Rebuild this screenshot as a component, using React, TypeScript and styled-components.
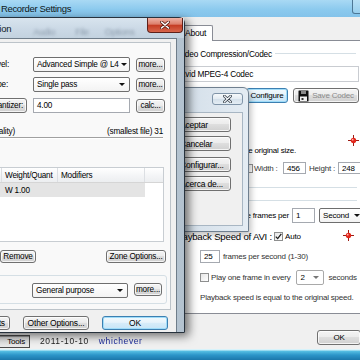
import React from "react";
import styled, { createGlobalStyle } from "styled-components";

const Global = createGlobalStyle`
  html, body { margin: 0; padding: 0; }
  body {
    width: 360px; height: 360px; overflow: hidden; background: #f0f0f0;
    font-family: "Liberation Sans", Arial, sans-serif; font-size: 8px; color: #000;
  }
  #root { width: 360px; height: 360px; }
`;

const Desktop = styled.div`
  position: relative; width: 360px; height: 360px; overflow: hidden;
  letter-spacing: -0.2px;
`;

/* ---------- shared controls ---------- */
const Btn = styled.div<{ $w?: number; $h?: number; $focus?: boolean; $off?: boolean; $ml?: number }>`
  box-sizing: border-box; flex: none;
  width: ${(p) => (p.$w ? `${p.$w}px` : "auto")};
  height: ${(p) => p.$h ?? 15}px;
  margin-left: ${(p) => p.$ml ?? 0}px;
  padding: 0 3px;
  display: flex; align-items: center; justify-content: center; gap: 3px;
  white-space: nowrap;
  color: ${(p) => (p.$off ? "#8a8a8a" : "#000")};
  border: 1px solid ${(p) => (p.$focus ? "#3c7fb1" : "#707070")};
  border-radius: 3px;
  background: ${(p) =>
    p.$focus
      ? "linear-gradient(#f2f9fd 0%, #e6f3fb 45%, #d6ecf9 50%, #c8e5f7 100%)"
      : "linear-gradient(#f4f4f4 0%, #ececec 45%, #dedede 50%, #d0d0d0 100%)"};
  box-shadow: inset 0 0 0 1px ${(p) => (p.$focus ? "#9fdcf9" : "rgba(255,255,255,.75)")};
`;

const Combo = styled.div<{ $w: number; $ml?: number; $light?: boolean }>`
  box-sizing: border-box; flex: none; overflow: hidden;
  width: ${(p) => p.$w}px; height: 15px;
  margin-left: ${(p) => p.$ml ?? 0}px;
  display: flex; align-items: center; justify-content: space-between; gap: 2px;
  padding: 0 4px 0 3px; white-space: nowrap;
  border: 1px solid ${(p) => (p.$light ? "#a9a9a9" : "#6e6e6e")};
  border-radius: 2px;
  background: ${(p) => (p.$light ? "#fff" : "linear-gradient(#ffffff, #f3f3f3)")};
`;

const Arrow = styled.span<{ $c?: string }>`
  width: 0; height: 0; flex: none;
  border-left: 3px solid transparent; border-right: 3px solid transparent;
  border-top: 3.5px solid ${(p) => p.$c ?? "#111"};
`;

const Field = styled.div<{ $w: number; $h?: number; $ml?: number }>`
  box-sizing: border-box; flex: none;
  width: ${(p) => p.$w}px; height: ${(p) => p.$h ?? 15}px;
  margin-left: ${(p) => p.$ml ?? 0}px;
  display: flex; align-items: center; padding-left: 3px;
  border: 1px solid #a5a9b0; background: #fff; white-space: nowrap;
`;

const Check = styled.div<{ $ml?: number }>`
  box-sizing: border-box; flex: none; width: 9px; height: 9px;
  margin-left: ${(p) => p.$ml ?? 0}px;
  border: 1px solid #8e8f8f; background: linear-gradient(135deg, #e6e6e6, #ffffff);
  display: flex; align-items: center; justify-content: center;
`;

const Txt = styled.span<{ $ml?: number; $c?: string }>`
  flex: none; white-space: nowrap; margin-left: ${(p) => p.$ml ?? 0}px;
  color: ${(p) => p.$c ?? "inherit"};
`;

/* ---------- background Recorder window ---------- */
const RecorderWin = styled.div`
  position: absolute; inset: 0; z-index: 1;
  display: flex; flex-direction: column; background: #f0f0f0;
`;

const RecTitle = styled.div`
  height: 17px; flex: none; display: flex; align-items: center;
  padding-left: 1px;
  background: linear-gradient(#a9d9f4, #8ccaee 55%, #84c3ea);
`;

const TitleText = styled.span`
  font-size: 9.5px; letter-spacing: -0.35px; color: #101820; white-space: nowrap;
`;

const CaptionStub = styled.div`
  margin-left: auto; margin-right: -4px; align-self: flex-start;
  width: 12px; height: 14px; box-sizing: border-box;
  border: 1px solid #4d7796; border-top: none; border-radius: 0 0 3px 3px;
  background: linear-gradient(#b8e0f6, #98cfee);
`;

const RecBody = styled.div`
  flex: 1; display: flex; flex-direction: column; min-height: 0;
`;

const TabStrip = styled.div`
  height: 23px; flex: none; display: flex; align-items: flex-end;
  padding-left: 183px;
`;

const Tab = styled.div`
  box-sizing: border-box; height: 16px; width: 30px; margin-bottom: -1px;
  padding: 2px 0 0 1px;
  border: 1px solid #898c95; border-bottom: none; border-radius: 2px 2px 0 0;
  background: #fff; position: relative; z-index: 1;
  font-size: 8.5px; white-space: nowrap;
`;

const TabPage = styled.div`
  box-sizing: border-box; height: 274px; flex: none;
  margin-left: 177px; padding-right: 1px;
  border: 1px solid #898c95; border-right: none; background: #fff;
  display: flex; flex-direction: column;
`;

const GroupTitle = styled.div<{ $mt: number }>`
  margin-top: ${(p) => p.$mt}px; height: 9px; display: flex; align-items: center; gap: 3px;
  white-space: nowrap; font-size: 8.3px;
  &::after { content: ""; flex: 1; height: 1px; background: #d5dfe5; margin-right: 3px; }
`;

const CodecBox = styled.div<{ $mt: number }>`
  margin-top: ${(p) => p.$mt}px; height: 16px; box-sizing: border-box;
  display: flex; align-items: center; padding-left: 2px;
  border: 1px solid #c9ccd1; border-left: none; background: #fff; font-size: 8.3px;
`;

const PageRow = styled.div<{ $mt: number; $h: number; $pl?: number; $end?: boolean; $gap?: number }>`
  margin-top: ${(p) => p.$mt}px; height: ${(p) => p.$h}px; flex: none;
  padding-left: ${(p) => p.$pl ?? 0}px;
  display: flex; align-items: center;
  justify-content: ${(p) => (p.$end ? "flex-end" : "flex-start")};
  gap: ${(p) => p.$gap ?? 0}px;
`;

const RightLabel = styled.span<{ $w: number; $size?: number }>`
  flex: none; width: ${(p) => p.$w}px; display: flex; justify-content: flex-end;
  white-space: nowrap; font-size: ${(p) => p.$size ?? 8}px;
`;

const FixedLabel = styled.span<{ $w: number; $ml?: number }>`
  flex: none; width: ${(p) => p.$w}px; margin-left: ${(p) => p.$ml ?? 0}px; white-space: nowrap; color: #333;
`;

const GroupLine = styled.div<{ $mt: number }>`
  margin-top: ${(p) => p.$mt}px; height: 1px; flex: none; background: #d5dfe5; margin-right: 2px;
`;

const Footer = styled.div`
  flex: 1; display: flex; align-items: flex-start; padding-top: 16px; box-sizing: border-box;
`;

const ToolsBtn = styled.div`
  box-sizing: border-box; margin-top: 5px; margin-left: -12px; width: 42px; height: 13px;
  border: 1px solid #4a4a4a; background: linear-gradient(#d9d9d9, #e9e9e9);
  box-shadow: inset 1px 1px 0 #9a9a9a;
  display: flex; align-items: center; justify-content: flex-end; padding-right: 4px;
  white-space: nowrap; font-size: 8px;
`;

const StatusTxt = styled.span<{ $ml: number; $c: string }>`
  margin-top: 6px; margin-left: ${(p) => p.$ml}px; color: ${(p) => p.$c};
  white-space: nowrap; font-size: 8.5px; letter-spacing: 0.6px; filter: blur(0.5px);
`;

const OkSlot = styled.div`
  margin-left: auto; margin-right: -1px; display: flex;
`;

const Taskbar = styled.div`
  height: 11px; flex: none;
  background: linear-gradient(#d7f3fb 0, #d7f3fb 1px, #57c0e4 2px, #2c95c9 6px, #1b77ab 100%);
`;

/* ---------- small codec dialog ---------- */
const SmallWin = styled.div`
  position: absolute; left: 165px; top: 87px; z-index: 2;
  width: 84px; height: 145px; box-sizing: border-box;
  border: 1px solid #6f7f8f; border-radius: 6px 6px 0 0;
  background: linear-gradient(90deg, #cfdbe6, #e4ecf3);
  box-shadow: 2px 3px 6px rgba(0, 0, 0, 0.25);
  display: flex; flex-direction: column; padding: 0 5px 5px 6px;
`;

const SmallTitle = styled.div`
  height: 24px; flex: none; display: flex; align-items: flex-start; justify-content: flex-end;
  padding-top: 5px; box-sizing: border-box;
`;

const GlassClose = styled.div`
  width: 31px; height: 12px; box-sizing: border-box; margin-right: 0;
  border: 1px solid #8094a8; border-radius: 3px;
  background: linear-gradient(#f6f9fb, #e3ebf2 50%, #d4e0ea 51%, #e4edf4);
  display: flex; align-items: center; justify-content: center;
`;

const SmallBody = styled.div`
  flex: 1; background: #f0f0f0; border: 1px solid #a8b6c3;
  display: flex; flex-direction: column; align-items: flex-end;
  padding: 4px 11px 0 0;
`;

const SmallBtn = styled(Btn)<{ $mt: number }>`
  margin-top: ${(p) => p.$mt}px; justify-content: flex-start; padding-left: 4px;
  font-size: 8.5px;
`;

/* ---------- front Xvid dialog ---------- */
const FrontWin = styled.div`
  position: absolute; left: -70px; top: 17px; z-index: 3;
  width: 255px; height: 316px; box-sizing: border-box;
  border: 1px solid #27323d; border-radius: 6px 6px 0 0;
  background: linear-gradient(90deg, #bccbd8, #c7d5e2 70%, #b3c2cf);
  box-shadow: 4px 3px 10px rgba(0, 0, 0, 0.55);
  display: flex; flex-direction: column; padding: 0 7px 0 7px;
`;

const FrontTitle = styled.div`
  height: 20px; flex: none; display: flex; align-items: flex-start;
  margin: 0 -7px; padding-left: 10px;
  background: linear-gradient(#d8e4ee, #cad8e5 60%, #c3d2df);
`;

const FrontTitleText = styled.span`
  margin-top: 5px; font-size: 9.5px; letter-spacing: -0.3px; color: #0e1a24; white-space: nowrap;
`;

const Ghost = styled.span<{ $ml: number }>`
  margin-top: 9px; margin-left: ${(p) => p.$ml}px; font-size: 9px; white-space: nowrap;
  color: rgba(40, 60, 80, 0.4); filter: blur(1.4px);
`;

const RedClose = styled.div`
  margin-left: auto; margin-right: 1px; width: 36px; height: 15px; box-sizing: border-box;
  border: 1px solid #5e211a; border-top: none; border-radius: 0 0 4px 4px;
  background: linear-gradient(#eeb3a6 0%, #dc7d6a 45%, #c43a22 50%, #d8664c 100%);
  display: flex; align-items: center; justify-content: center;
`;

const Client = styled.div`
  flex: 1; background: #f0f0f0; border: 1px solid #6f7d8a; border-bottom: none;
  display: flex; flex-direction: column; padding: 3px 5px 0 5px;
`;

const Panel = styled.div`
  flex: none; box-sizing: border-box; height: 268px;
  border: 1px solid #bcc3c9; background: #f9f9f9;
  display: flex; flex-direction: column; padding-bottom: 5px;
  font-size: 8.2px;
`;

const FormRow = styled.div<{ $mt: number }>`
  margin-top: ${(p) => p.$mt}px; height: 15px; flex: none; display: flex; align-items: center;
`;

const LabelCell = styled.div<{ $pr: number }>`
  width: 84px; flex: none; display: flex; justify-content: flex-end; padding-right: ${(p) => p.$pr}px;
  box-sizing: border-box; white-space: nowrap;
`;

const RangeRow = styled.div`
  margin-top: 14px; height: 9px; flex: none; display: flex; align-items: center;
  justify-content: space-between; padding-right: 7px; white-space: nowrap;
`;

const Groove = styled.div`
  margin-top: 1px; height: 2px; flex: none; margin-right: 7px;
  border-top: 1px solid #a0a0a0; border-bottom: 1px solid #ffffff; box-sizing: border-box;
`;

const Table = styled.div`
  margin: 28px 6px 0 5px; height: 75px; flex: none; box-sizing: border-box;
  border: 1px solid #c8cdd2; background: #fff; display: flex; flex-direction: column;
`;

const TRow = styled.div<{ $head?: boolean }>`
  display: grid; grid-template-columns: 51px 56px 87px 1fr;
  height: ${(p) => (p.$head ? 15 : 14)}px; flex: none;
  background: ${(p) => (p.$head ? "linear-gradient(#ffffff, #f3f4f6 60%, #eceef0)" : "transparent")};
  border-bottom: ${(p) => (p.$head ? "1px solid #d5d5d5" : "none")};
  box-sizing: border-box;
`;

const TCell = styled.div<{ $head?: boolean; $sel?: boolean }>`
  display: flex; align-items: center; padding-left: 3px; white-space: nowrap; overflow: hidden;
  border-right: ${(p) => (p.$head ? "1px solid #dcdfe3" : "none")};
  background: ${(p) => (p.$sel ? "#e4e4e4" : "transparent")};
`;

const BtnRow = styled.div`
  margin-top: 8px; height: 13px; flex: none; display: flex; align-items: center; gap: 5px;
  padding-left: 10px; padding-right: 4px;
`;

const Spacer = styled.div`flex: 1;`;

const GroupBox = styled.div`
  margin: 12px 3px 0 3px; height: 29px; flex: none; box-sizing: border-box;
  border: 1px solid #d5dfe5; border-radius: 3px;
  display: flex; align-items: flex-start; padding-top: 7px; padding-left: 83px;
`;

const QuantBtn = styled(Btn)`
  justify-content: flex-end;
`;

const DialogButtons = styled.div`
  margin-top: 6px; height: 14px; flex: none; display: flex; justify-content: flex-end; gap: 13px;
  padding-right: 3px; font-size: 8.5px;
`;

/* ---------- icons ---------- */
const Target = () => (
  <svg width="11" height="11" viewBox="0 0 11 11">
    <path d="M5.5 0v3.2M5.5 7.8V11M0 5.5h3.2M7.8 5.5H11" stroke="#9c1b12" strokeWidth="1" />
    <circle cx="5.5" cy="5.5" r="2.7" fill="#e3261b" />
    <circle cx="4.7" cy="4.7" r="0.9" fill="#ffb0a8" />
  </svg>
);

const Floppy = () => (
  <svg width="11" height="12" viewBox="0 0 11 12">
    <rect x="0.5" y="0.5" width="10" height="11" rx="0.5" fill="#111" />
    <rect x="3" y="0.5" width="5" height="3.5" fill="#8a8a8a" />
    <rect x="2" y="6.5" width="7" height="4.5" fill="#f2f2f2" />
    <rect x="3.5" y="8" width="2" height="2" fill="#333" />
  </svg>
);

const CheckMark = () => (
  <svg width="7" height="7" viewBox="0 0 7 7">
    <path d="M0.8 3.6 L2.7 5.6 L6.3 0.9" stroke="#1d1d1d" strokeWidth="1.3" fill="none" />
  </svg>
);

const WhiteX = () => (
  <svg width="10" height="8" viewBox="0 0 10 8">
    <path d="M1.5 1 L8.5 7 M8.5 1 L1.5 7" stroke="#5a1d14" strokeWidth="3" strokeLinecap="round" />
    <path d="M1.5 1 L8.5 7 M8.5 1 L1.5 7" stroke="#ffffff" strokeWidth="1.6" strokeLinecap="round" />
  </svg>
);

const OutlineX = () => (
  <svg width="9" height="8" viewBox="0 0 9 8">
    <path d="M1.2 1 L7.8 7 M7.8 1 L1.2 7" stroke="#2c3640" strokeWidth="2.6" strokeLinecap="round" />
    <path d="M1.2 1 L7.8 7 M7.8 1 L1.2 7" stroke="#f4f7fa" strokeWidth="1.2" strokeLinecap="round" />
  </svg>
);

export default function App() {
  return (
    <>
      <Global />
      <Desktop>
        <RecorderWin>
          <RecTitle>
            <TitleText>Recorder Settings</TitleText>
            <CaptionStub />
          </RecTitle>
          <RecBody>
            <TabStrip>
              <Tab>About</Tab>
            </TabStrip>
            <TabPage>
              <GroupTitle $mt={8}>Video Compression/Codec</GroupTitle>
              <CodecBox $mt={8}>Xvid MPEG-4 Codec</CodecBox>
              <PageRow $mt={6} $h={15} $end $gap={5}>
                <Btn $w={60}>Select Codec</Btn>
                <Btn $w={42} $focus>Configure</Btn>
                <Btn $w={66} $off>
                  <Floppy />
                  Save Codec
                </Btn>
              </PageRow>
              <PageRow $mt={32} $h={11} $end>
                <Target />
              </PageRow>
              <PageRow $mt={0} $h={8} $pl={44}>
                <Txt>Keep the original size.</Txt>
              </PageRow>
              <PageRow $mt={8} $h={12} $pl={66}>
                <Check />
                <FixedLabel $w={28} $ml={1}>Width :</FixedLabel>
                <Field $w={23} $h={12} $ml={1}>456</Field>
                <FixedLabel $w={28} $ml={3}>Height :</FixedLabel>
                <Field $w={23} $h={12} $ml={1}>248</Field>
              </PageRow>
              <GroupLine $mt={13} />
              <GroupLine $mt={12} />
              <PageRow $mt={7} $h={15}>
                <RightLabel $w={111}>Capture frames per</RightLabel>
                <Field $w={23} $ml={3}>1</Field>
                <Combo $w={46} $ml={4}>
                  Second
                  <Arrow />
                </Combo>
              </PageRow>
              <PageRow $mt={8} $h={10}>
                <RightLabel $w={94} $size={9.6}>Playback Speed of AVI :</RightLabel>
                <Check $ml={2}>
                  <CheckMark />
                </Check>
                <Txt $ml={2}>Auto</Txt>
                <Txt $ml={42}>
                  <Target />
                </Txt>
              </PageRow>
              <PageRow $mt={9} $h={13} $pl={22}>
                <Field $w={20} $h={13}>25</Field>
                <Txt $ml={3} $c="#333">frames per second (1-30)</Txt>
              </PageRow>
              <PageRow $mt={8} $h={13} $pl={22}>
                <Check />
                <Txt $ml={2} $c="#333">Play one frame in every</Txt>
                <Combo $w={28} $ml={6} $light>
                  2
                  <Arrow $c="#777" />
                </Combo>
                <Txt $ml={4} $c="#333">seconds</Txt>
              </PageRow>
              <PageRow $mt={8} $h={10} $pl={22}>
                <Txt $c="#333">Playback speed is equal to the original speed.</Txt>
              </PageRow>
            </TabPage>
            <Footer>
              <ToolsBtn>Tools</ToolsBtn>
              <StatusTxt $ml={10} $c="#1e1e1e">2011-10-10</StatusTxt>
              <StatusTxt $ml={10} $c="#1b2a9a">whichever</StatusTxt>
              <OkSlot>
                <Btn $w={44}>OK</Btn>
              </OkSlot>
            </Footer>
          </RecBody>
          <Taskbar />
        </RecorderWin>

        <SmallWin>
          <SmallTitle>
            <GlassClose>
              <OutlineX />
            </GlassClose>
          </SmallTitle>
          <SmallBody>
            <SmallBtn $w={56} $mt={0}>Aceptar</SmallBtn>
            <SmallBtn $w={56} $mt={4}>Cancelar</SmallBtn>
            <SmallBtn $w={56} $mt={6}>Configurar...</SmallBtn>
            <SmallBtn $w={56} $mt={4}>Acerca de...</SmallBtn>
          </SmallBody>
        </SmallWin>

        <FrontWin>
          <FrontTitle>
            <FrontTitleText>Xvid configuration</FrontTitleText>
            <Ghost $ml={22}>Audio</Ghost>
            <Ghost $ml={20}>File</Ghost>
            <Ghost $ml={16}>Options</Ghost>
            <RedClose>
              <WhiteX />
            </RedClose>
          </FrontTitle>
          <Client>
            <Panel>
              <FormRow $mt={14}>
                <LabelCell $pr={20}>Profile @ Level:</LabelCell>
                <Combo $w={97} $ml={4}>
                  Advanced Simple @ L4
                  <Arrow />
                </Combo>
                <Btn $w={29} $ml={6} $h={14}>more...</Btn>
              </FormRow>
              <FormRow $mt={5}>
                <LabelCell $pr={21}>Encoding type:</LabelCell>
                <Combo $w={97} $ml={4}>
                  Single pass
                  <Arrow />
                </Combo>
                <Btn $w={29} $ml={6} $h={14}>more...</Btn>
              </FormRow>
              <FormRow $mt={6}>
                <LabelCell $pr={2}>
                  <QuantBtn $w={66} $h={15}>Target quantizer:</QuantBtn>
                </LabelCell>
                <Field $w={97} $ml={4}>4.00</Field>
                <Btn $w={29} $ml={6} $h={14}>calc...</Btn>
              </FormRow>
              <RangeRow>
                <span>1 (maximum quality)</span>
                <span>(smallest file) 31</span>
              </RangeRow>
              <Groove />
              <Table>
                <TRow $head>
                  <TCell $head>Start</TCell>
                  <TCell $head>Weight/Quant</TCell>
                  <TCell $head>Modifiers</TCell>
                  <TCell />
                </TRow>
                <TRow>
                  <TCell $sel>0</TCell>
                  <TCell $sel>W 1.00</TCell>
                  <TCell $sel />
                  <TCell />
                </TRow>
              </Table>
              <BtnRow>
                <Btn $w={40} $h={13}>Add</Btn>
                <Btn $w={36} $h={13}>Remove</Btn>
                <Spacer />
                <Btn $w={60} $h={13}>Zone Options...</Btn>
              </BtnRow>
              <GroupBox>
                <Combo $w={96}>
                  General purpose
                  <Arrow />
                </Combo>
                <Btn $w={28} $ml={6} $h={13}>more...</Btn>
              </GroupBox>
            </Panel>
            <DialogButtons>
              <Btn $w={60} $h={14}>Load Defaults</Btn>
              <Btn $w={66} $h={14}>Other Options...</Btn>
              <Btn $w={66} $h={14} $focus>OK</Btn>
            </DialogButtons>
          </Client>
        </FrontWin>
      </Desktop>
    </>
  );
}
